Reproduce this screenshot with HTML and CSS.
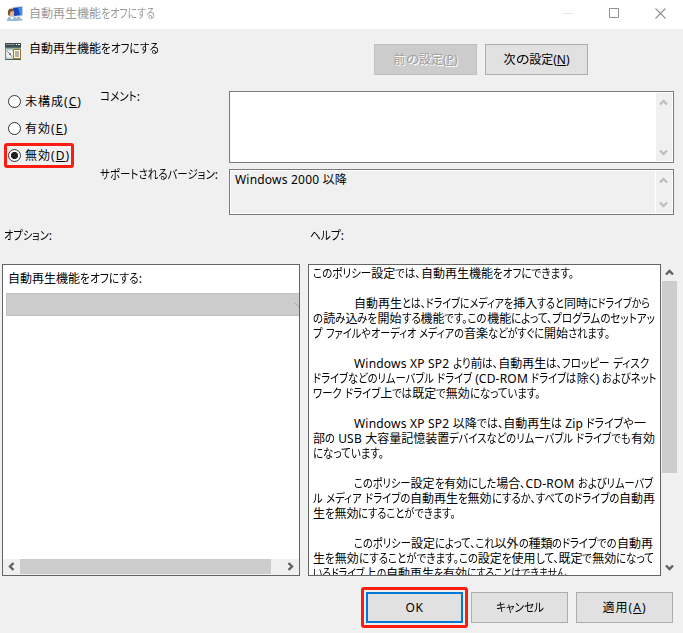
FILE: index.html
```html
<!DOCTYPE html>
<html lang="ja">
<head>
<meta charset="utf-8">
<title>自動再生機能をオフにする</title>
<link rel="stylesheet" href="styles.css">
</head>
<body>
<header class="titlebar">
  <svg class="app-icon" width="17" height="16" viewBox="0 0 17 16">
    <path d="M5 1l11-1v10l-10 1z" fill="#c9d3df"/><path d="M6 2l9-1v8l-8 1z" fill="#1745b5"/><path d="M11 1.500l4-.5v8l-2 .2z" fill="#3f8cf0"/>
    <path d="M10 11l3-.3.5 2 2 .3v1.500l-6 .5z" fill="#a9b5c3"/>
    <path d="M0 15q0-4 3-4.500h3q4 .5 5 4.500z" fill="#91b9dc"/><path d="M3 11l2 3 2-3z" fill="#fff"/>
    <ellipse cx="4.500" cy="7" rx="2.700" ry="3.500" fill="#e7b58d"/><path d="M1 9q-1-6 3-6.500Q7 3 7 5L4 5.500Q2.500 6 2.700 10z" fill="#76502f"/>
  </svg>
  <span class="fit" data-width="126">自動再生機能をオフにする</span>
  <div class="controls">
    <svg width="11" height="11"><path d="M0 5.500h10" stroke="#e6e6e6"/></svg>
    <svg width="11" height="11"><path d="M.5.5h9v9h-9z" fill="none" stroke="#8f8f8f"/></svg>
    <svg width="11" height="11"><path d="M.5.5l10 10M10.500.5l-10 10" stroke="#8f8f8f" stroke-width="1.100"/></svg>
  </div>
</header>

<section class="heading">
  <svg class="policy-icon" width="17" height="17" viewBox="0 0 17 17">
    <path d="M0 0h16v16H0z" fill="#b9cfc3"/><path d="M0 0h16v5H0z" fill="#3d4b52"/><path d="M1 1h9v1H1z" fill="#7f9090"/><path d="M11 1h1v1h-1zM13 1h2v1h-2z" fill="#fff"/>
    <path d="M0 5h16M.5 5v11" stroke="#6b8e80"/><circle cx="5" cy="11" r="4" fill="#eee"/><path d="M5 11L2 8M5 11l2 3" stroke="#bd78bd"/><circle cx="5" cy="11" r="1" fill="#4b805c"/>
    <path d="M8.500 6.500h7v9h-7z" fill="#fffbd7" stroke="#96752e"/><path d="M10 9h4M10 11h4M10 13h4" stroke="#668"/><path d="M0 16.500h16" stroke="#486653"/>
  </svg>
  <div class="heading-text"><span class="fit" data-width="130">自動再生機能をオフにする</span></div>
  <button class="btn nav disabled" disabled><span class="fit" data-width="64">前の設定(<u>P</u>)</span></button>
  <button class="btn nav"><span class="fit" data-width="66">次の設定(<u>N</u>)</span></button>
</section>

<section class="settings">
  <div class="radios">
    <label class="radio"><i></i><span class="fit" data-width="57">未構成(<u>C</u>)</span></label>
    <label class="radio"><i></i><span class="fit" data-width="43">有効(<u>E</u>)</span></label>
    <label class="radio marked"><i class="on"></i><span class="fit" data-width="45">無効(<u>D</u>)</span></label>
  </div>
  <div class="labels">
    <div><span class="fit" data-width="40">コメント:</span></div>
    <div><span class="fit" data-width="118">サポートされるバージョン:</span></div>
  </div>
  <div class="fields">
    <div class="field comment"><div class="value"></div>
      <div class="vbar"><svg width="9" height="7"><path d="M1 5.500l3.500-3.500L8 5.500"/></svg><svg width="9" height="7"><path d="M1 1.500L4.500 5 8 1.500"/></svg></div></div>
    <div class="field support"><div class="value"><span class="fit" data-width="112">Windows 2000 以降</span></div>
      <div class="vbar"><svg width="9" height="7"><path d="M1 5.500l3.500-3.500L8 5.500"/></svg><svg width="9" height="7"><path d="M1 1.500L4.500 5 8 1.500"/></svg></div></div>
  </div>
</section>

<section class="captions"><div><span class="fit" data-width="48">オプション:</span></div><div><span class="fit" data-width="34">ヘルプ:</span></div></section>

<main class="panels">
  <div class="panel options">
    <div class="option-name"><span class="fit" data-width="134">自動再生機能をオフにする:</span></div>
    <div class="combo"><svg width="4" height="6"><path d="M0 1l4 4" stroke="#aaa"/></svg></div>
    <div class="hbar"><svg width="7" height="9"><path d="M5.500 1L2 4.500 5.500 8"/></svg><div class="hthumb"></div><svg width="7" height="9"><path d="M1.500 1L5 4.500 1.500 8"/></svg></div>
  </div>
  <div class="panel help">
    <p><span class="fit" data-width="261">このポリシー設定では、自動再生機能をオフにできます。</span></p>
    <p><span class="fit indent" data-width="296">自動再生とは、ドライブにメディアを挿入すると同時にドライブから</span>
    <span class="fit" data-width="342">の読み込みを開始する機能です。この機能によって、プログラムのセットアッ</span>
    <span class="fit" data-width="297">プ ファイルやオーディオ メディアの音楽などがすぐに開始されます。</span></p>
    <p><span class="fit indent" data-width="295">Windows XP SP2 より前は、自動再生は、フロッピー ディスク</span>
    <span class="fit" data-width="344">ドライブなどのリムーバブル ドライブ (CD-ROM ドライブは除く) およびネット</span>
    <span class="fit" data-width="227">ワーク ドライブ上では既定で無効になっています。</span></p>
    <p><span class="fit indent" data-width="292">Windows XP SP2 以降では、自動再生は Zip ドライブや一</span>
    <span class="fit" data-width="342">部の USB 大容量記憶装置デバイスなどのリムーバブル ドライブでも有効</span>
    <span class="fit" data-width="71">になっています。</span></p>
    <p><span class="fit indent" data-width="299">このポリシー設定を有効にした場合、CD-ROM およびリムーバブ</span>
    <span class="fit" data-width="342">ル メディア ドライブの自動再生を無効にするか、すべてのドライブの自動再</span>
    <span class="fit" data-width="143">生を無効にすることができます。</span></p>
    <p><span class="fit indent" data-width="299">このポリシー設定によって、これ以外の種類のドライブでの自動再</span>
    <span class="fit" data-width="341">生を無効にすることができます。この設定を使用して、既定で無効になって</span>
    <span class="fit" data-width="258">いるドライブ上の自動再生を有効にすることはできません。</span></p>
  </div>
  <div class="scroll"><svg width="9" height="7"><path d="M1 5.500l3.500-3.500L8 5.500"/></svg><div class="thumb"></div><svg width="9" height="7"><path d="M1 1.500L4.500 5 8 1.500"/></svg></div>
</main>

<footer class="actions">
  <div class="highlight"><button class="btn default"><span class="fit" data-width="18">OK</span></button></div>
  <button class="btn"><span class="fit" data-width="48">キャンセル</span></button>
  <button class="btn"><span class="fit" data-width="44">適用(<u>A</u>)</span></button>
</footer>
<script src="fit.js"></script>
</body>
</html>
```
FILE: styles.css
```css
* { box-sizing: border-box; }
body { margin: 0; width: 683px; height: 633px; overflow: hidden; background: #f0f0f0; color: #000; font: 12px/15px "Noto Sans", "Noto Sans CJK JP", sans-serif; }
svg { display: block; flex: none; }
u { text-underline-offset: 1px; text-decoration-thickness: 1px; text-decoration-skip-ink: none; }
.fit { display: inline-block; white-space: pre; height: 15px; vertical-align: top; }
.run { display: inline-block; height: 15px; vertical-align: top; white-space: pre; transform-origin: 0 50%; font-feature-settings: "palt"; }
.latin { letter-spacing: .2px; }

.titlebar { height: 29px; background: #fff; color: #999; display: flex; align-items: center; padding: 0 17px 2px 7px; }
.titlebar .fit { margin-left: 5px; }
.controls { margin-left: auto; display: flex; gap: 35px; }

.heading { height: 59px; display: flex; align-items: flex-start; padding: 15px 0 0 5px; }
.policy-icon { margin: -1px 7px 0 0; }
.heading-text { margin-top: -3px; width: 130px; white-space: nowrap; }
.btn { width: 97px; height: 31px; padding: 0; border: 1px solid #adadad; background: #e1e1e1; color: #000; font: inherit; display: flex; align-items: center; justify-content: center; }
.btn.nav { width: 103px; margin-left: 8px; }
.btn.disabled { margin-left: 215px; background: #ccc; border-color: #bfbfbf; color: #a0a0a0; text-shadow: 1px 1px #fff; }

.settings { height: 136px; display: grid; grid-template-columns: 96px 129px 445px; padding: 3px 0 0 4px; }
.radio { display: flex; align-items: center; height: 26px; width: 90px; padding-left: 4px; margin-top: -3px; margin-bottom: 4px; }
.radio i { width: 13px; height: 13px; border: 1px solid #333; border-radius: 50%; background: #fff; margin-right: 4px; flex: none; }
.radio i.on { background: radial-gradient(circle, #222 0 3.2px, #fff 4px); }
.radio.marked { width: 70px; height: 25px; margin-top: -2px; padding-left: 1px; border: 3px solid #fb1c12; border-radius: 3px; }
.labels { display: grid; grid-template-rows: 78px 15px; }
.labels > div { margin-top: -2px; }
.field { display: flex; border: 1px solid #7a7a7a; box-shadow: inset 0 0 0 1px #fff; padding: 1px; }
.comment { height: 72px; background: #fff; }
.support { height: 46px; margin-top: 6px; background: #f0f0f0; }
.value { flex: 1; padding: 1px 0 0 4px; }
.vbar { width: 17px; background: #f0f0f0; border-left: 1px solid #fff; display: flex; flex-direction: column; align-items: center; justify-content: space-between; padding: 6px 1px 5px 0; }
.vbar path { fill: none; stroke: #bfbfbf; stroke-width: 2.4; }

.captions { height: 40px; display: grid; grid-template-columns: 306px 1fr; padding: 4px 0 0 4px; }

.panels { height: 312px; display: flex; padding-left: 2px; }
.panel { border: 1px solid #646464; background: #fff; overflow: hidden; }
.options { width: 298px; margin-right: 8px; display: flex; flex-direction: column; }
.option-name { height: 28px; padding: 6px 0 0 5px; }
.combo { height: 23px; margin-left: 3px; background: #ccc; border: 1px solid #bfbfbf; border-right: 0; display: flex; align-items: center; justify-content: flex-end; }
.hbar { margin-top: auto; height: 16px; background: #f0f0f0; border-bottom: 1px solid #f0f0f0; display: flex; align-items: center; padding: 0 5px; }
.hthumb { width: 251px; height: 15px; background: #cdcdcd; margin: 0 auto 0 5px; }
.hbar path, .scroll path { fill: none; stroke: #606060; stroke-width: 2.4; }
.help { width: 353px; padding: 1px 0 0 4px; }
.help p { margin: 0 0 15px; display: flex; flex-direction: column; align-items: flex-start; }
.indent { margin-left: 41px; }
.scroll { width: 15px; margin-left: 1px; display: flex; flex-direction: column; align-items: center; padding: 5px 0; }
.thumb { width: 15px; height: 192px; background: #cdcdcd; margin: 5px 0 auto; }

.actions { display: flex; align-items: flex-start; padding: 11px 0 0 361px; }
.actions > .btn { margin: 5px 8px 0 0; }
.highlight { width: 107px; height: 41px; padding: 2px; border: 3px solid #fb1c12; border-radius: 3px; margin-right: 3px; }
.default { border: 2px solid #0078d7; }
```
FILE: fit.js
```js
const kana = /([\u3001\u3002\u3040-\u30ff]+)/;
const pieces = /([\u3001\u3002\u3040-\u30ff]+|[A-Za-z][A-Za-z0-9 -]+)/;
for (const line of document.querySelectorAll('.fit')) {
  const target = Number(line.dataset.width);
  for (const node of [...line.childNodes]) {
    if (node.nodeType !== Node.TEXT_NODE || !kana.test(node.data)) continue;
    const parts = node.data.split(pieces).filter(Boolean).map(text => {
      if (!pieces.test(text)) return document.createTextNode(text);
      const run = document.createElement('span');
      run.className = kana.test(text) ? 'run' : 'latin';
      run.textContent = text;
      return run;
    });
    node.replaceWith(...parts);
  }
  const total = line.getBoundingClientRect().width;
  const runs = [...line.querySelectorAll('.run')];
  if (runs.length) {
    const widths = runs.map(run => run.getBoundingClientRect().width);
    const sum = widths.reduce((a, b) => a + b, 0);
    const ratio = (target - total + sum) / sum;
    runs.forEach((run, i) => {
      run.style.width = widths[i] + 'px';
      run.style.marginRight = widths[i] * (ratio - 1) + 'px';
      run.style.transform = `scaleX(${ratio})`;
    });
  } else {
    line.style.letterSpacing = (target - total) / line.textContent.length + 'px';
  }
}
```
